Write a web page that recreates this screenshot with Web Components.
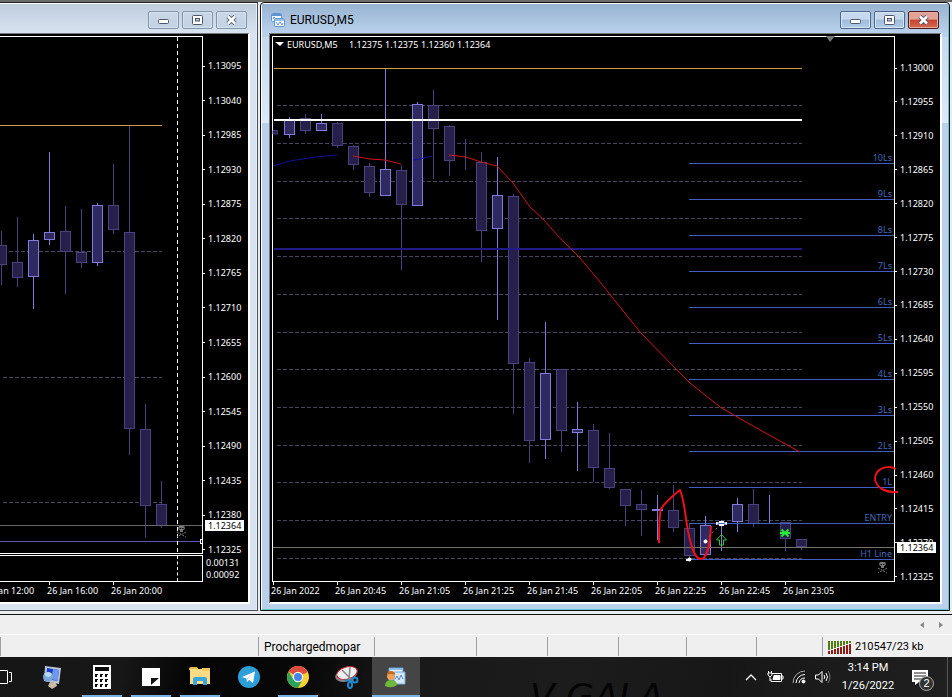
<!DOCTYPE html>
<html lang="en">
<head>
<meta charset="utf-8">
<title>EURUSD,M5</title>
<style>
html,body{margin:0;height:100%;background:#f0f0f0}
body{font-family:Roboto,"Noto Sans",sans-serif;font-size:12px;color:#000}
</style>
</head>
<body>
<trade-desk></trade-desk>
<script>
const define = (name, html, setup) => customElements.define(name, class extends HTMLElement {
  connectedCallback() {
    if (this.shadowRoot) return;
    const t = document.createElement('template');
    t.innerHTML = typeof html === 'function' ? html(this) : html;
    this.attachShadow({mode: 'open'}).append(t.content.cloneNode(true));
    if (setup) setup(this);
  }
});

/* ---------- window chrome ---------- */
define('window-controls', `
<style>
:host{display:flex;gap:3px}
button{box-sizing:border-box;width:31px;height:18px;padding:0;border:1px solid #8295ad;border-radius:2px;background:linear-gradient(#c9d7e7,#c3d2e3);display:grid;place-items:center;box-shadow:inset 0 0 0 1px #d5e1ee}
:host([active]) button{border-color:#50678a;background:linear-gradient(#c5d8ee 45%,#9fbcdc 50%,#b4cee9);box-shadow:inset 0 0 0 1px #d3e4f6}
:host([active]) button.close{border-color:#4a1a20;background:linear-gradient(#e2a395 45%,#c44330 50%,#d56b52);box-shadow:inset 0 0 0 1px #e4ab9f}
svg{display:block}
</style>
<button aria-label="Minimize"><svg width="13" height="10"><rect x="1.5" y="4.500" width="10" height="4" rx="1" fill="#fff" stroke="#4e5668"/></svg></button>
<button aria-label="Maximize"><svg width="13" height="10"><rect x="1.500" y=".5" width="10" height="9" rx="1" fill="#fff" stroke="#4e5668"/><rect x="4.500" y="3.500" width="4" height="2.500" fill="#b9cbe0" stroke="#4e5668"/></svg></button>
<button class="close" aria-label="Close"><svg width="13" height="10"><path d="M3 1.500L10 8.500M10 1.500L3 8.500" stroke="#4e5668" stroke-width="4.400"/><path d="M3 1.500L10 8.500M10 1.500L3 8.500" stroke="#fff" stroke-width="2.500"/></svg></button>`);

define('chart-window', el => `
<style>
:host{display:flex;flex-direction:column;box-sizing:border-box;min-width:0;border:1px solid #4b5058;border-top-color:#20242a;box-shadow:inset 0 1px #fff,inset -1px 0 #e8eff6;background:#d7e3f0;padding:0 7px 6px 0;border-left:0}
:host([active]){background:linear-gradient(#c4daf1,#dceafa 85px) 0 34px/100% 86px no-repeat,#b9d1ec;border:1px solid #111;box-shadow:inset 0 1px #fff,inset 1px 0 #fff,inset -1px 0 #5cc6cd,inset 0 -1px #5cc6cd;padding:0 7px 6px 8px;border-radius:4px 4px 0 0}
header{display:flex;align-items:center;height:29px;box-sizing:border-box;padding-top:2px;background:linear-gradient(#c0cddd,#d7e3f0);margin:1px -6px 0 0;padding-right:9px;font-size:12px}
:host([active]) header{background:linear-gradient(#98b4d1,#b9d1ec);margin:1px -6px 0 -7px;padding-left:9px;padding-right:9px}
h1{font:inherit;margin:0;flex:1;padding-left:5px}
.client{flex:1;min-height:0;display:flex;flex-direction:column;background:#000;border:solid #fff;border-width:1px 2px 2px 0;border-top-color:#777}
:host([active]) .client{border-left:1px solid #777}
::slotted(*){flex:1;min-height:0}
</style>
<header>${el.title ? `<svg width="14" height="14" aria-hidden="true"><rect x=".5" y=".5" width="10" height="8" rx="1" fill="#eef6ff" stroke="#5e94d0"/><path d="M1 2h9" stroke="#5e94d0" stroke-width="2"/><path d="M2 6l1-2 2 2 1-1" fill="none" stroke="#5e94d0"/><rect x="3.500" y="5.500" width="10" height="8" rx="1" fill="#fff" stroke="#5e94d0"/><path d="M4 7h9" stroke="#77a9de" stroke-width="1.500"/><path d="M5 9l2 3 2-3 2 3 1-2" fill="none" stroke="#5e94d0"/></svg>` : ''}
<h1>${el.title || ''}</h1><window-controls ${el.hasAttribute('active') ? 'active' : ''}></window-controls></header>
<div class="client"><slot></slot></div>`);

/* ---------- scales ---------- */
define('price-scale', el => `
<style>
:host{display:block;position:relative;color:#fff;font-family:"Noto Sans",sans-serif;font-size:9px;line-height:10px}
ul{list-style:none;margin:0;padding:var(--top) 0 0;box-sizing:border-box;height:100%;display:flex;flex-direction:column;justify-content:space-between}
li{display:flex;align-items:center;gap:3px;height:10px}
li::before{content:"";width:2px;height:1px;background:#fff}
b{position:absolute;left:2px;top:var(--now);background:#fff;color:#000;font-weight:400;line-height:11px;padding:0 3px}
</style>
<ul>${el.getAttribute('values').split(' ').map(v => `<li>${v}</li>`).join('')}</ul><b>${el.getAttribute('now')}</b>`);

define('time-scale', el => `
<style>
:host{display:flex;overflow:hidden;color:#fff;font-family:"Noto Sans",sans-serif;font-size:9px;line-height:18px;white-space:nowrap}
span{flex:0 0 64px;position:relative}
span::before{content:"";position:absolute;left:2px;top:0;width:1px;height:3px;background:#fff}
</style>${el.getAttribute('values').split('|').map(v => `<span>${v}</span>`).join('')}`);

/* ---------- plots ---------- */
const candles = list => list.map(([x, hi, top, bot, lo, up]) => {
  const s = up ? '#817cdc' : '#48427f', f = up ? '#2f2960' : '#251f49';
  return `<path d="M${x + .5} ${hi}V${lo}" stroke="${s}"/><rect x="${x - 4.5}" y="${top + .5}" width="10" height="${Math.max(bot - top - 1, 0)}" fill="${f}" stroke="${s}"/>`;
}).join('');
const dashes = (ys, x1, x2) => ys.map(y => `<path d="M${x1} ${y + .5}H${x2}" stroke="#48465f" stroke-dasharray="4 2"/>`).join('');
const skull = (x, y) => `<g transform="translate(${x} ${y})" fill="#777"><path d="M2 0h5l1 2-1 2H6v2H3V4H2L1 2z"/><path d="M2.500 2h1.500v1H2.500zM5 2h1.500v1H5z" fill="#000"/><path d="M0 6l9 5M9 6L0 11" stroke="#777" fill="none" stroke-dasharray="2 1"/></g>`;

const plotStyle = `<style>
:host{display:block;position:relative;overflow:hidden;min-width:0}
svg{display:block;position:absolute;width:100%;height:100%;overflow:visible}
text{font-family:"Noto Sans",sans-serif;font-size:9px}
</style>`;

define('hourly-plot', `${plotStyle}<svg role="img" aria-label="Hourly candles"><g transform="translate(0 -37)">
${dashes([251, 377, 502], 3, 162)}
${candles([[1,231,245,265,285],[17,217,262,278,287],[33,234,240,277,309,1],[49,152,232,240,245,1],[65,206,231,252,294],[81,209,252,263,268],[97,203,205,263,266,1],[113,164,205,230,234],[129,125,232,429,455],[145,404,429,506,538],[161,481,504,526,528]])}
<path d="M0 125.500H162" stroke="#d39a55"/><path d="M0 525.500H202" stroke="#686868"/><path d="M0 541.500H202" stroke="#5b55ad"/>
<path d="M177.500 37V553" stroke="#fff" stroke-dasharray="4 3"/>
<rect x="200.500" y="539.500" width="3" height="4" stroke="#fff"/>${skull(177, 526)}
</g></svg>`);

const levels = ['10Ls','9Ls','8Ls','7Ls','6Ls','5Ls','4Ls','3Ls','2Ls','1L','ENTRY','H1 Line'];
const quotes = ['1.12375','1.12375','1.12360','1.12364'];
define('five-minute-plot', `${plotStyle}<style>:host{overflow:visible}</style><svg role="img" aria-label="EURUSD five minute candles"><g transform="translate(-273 -37)">
<path d="M826 36h9l-5 6z" fill="#777"/>
${dashes([105,143,181,218,256,294,332,369,407,445,482,520,558], 277, 802)}
<path d="M273 134V130.500H277.500V134H273" fill="#251f49" stroke="#433d78"/>
${candles([[289,117,120,135,138,1],[305,114,118,131,134],[321,114,123,131,131,1],[337,122,123,146,148],[353,145,146,165,170],[369,163,166,193,197],[385,68,169,196,196,1],[401,165,170,205,270],[417,102,104,206,206,1],[433,90,105,129,179],[449,125,126,161,176],[465,139,160,161,170],[481,152,162,231,262],[497,157,195,229,320,1],[513,194,196,364,414],[529,358,362,441,463],[545,322,373,440,459,1],[561,369,369,431,452],[577,402,429,433,471,1],[593,424,430,468,482],[609,433,468,488,489],[625,489,489,506,526],[641,490,504,510,536],[657,495,509,511,540,1],[673,485,510,528,532],[689,523,528,556,558],[705,516,525,555,557,1],[721,520,522,525,551,1],[737,498,504,522,532,1],[753,489,504,524,527],[769,495,522,523,523,1],[785,522,522,539,551],[801,539,539,547,550]])}
<path d="M274 68.500H802" stroke="#c9a43c"/><path d="M274 120H802" stroke="#fff" stroke-width="2"/><path d="M274 249H802" stroke="#1f1a85" stroke-width="2"/><path d="M273 547.500H894" stroke="#74746a"/>
<g fill="#4a68bd" stroke="none" text-anchor="end">${levels.map((l, i) => `<path d="M689 ${163.5 + i * 36}H894" stroke="#445cc4"/><text x="892" y="${161 + i * 36}">${l}</text>`).join('')}</g>
<g fill="none"><path d="M273 166L290 161 315 157 337 155M413 160L420 159 432 156" stroke="#10109c"/>
<path d="M353 156L370 159 385 160 401 164M449 155L466 157 481 162 497 166 513 183 530 207 543 219 560 238 580 258 600 282 640 332 675 368 690 383 720 407 760 430 800 452" stroke="#d0141c"/></g>
<path d="M705 540L724 521" stroke="#6b6898" stroke-dasharray="2 3"/>
<g fill="#fff"><circle cx="705.500" cy="541.500" r="2"/><circle cx="689.500" cy="559.500" r="2"/><path d="M686 559h2v2h-2zM716 522l3 1-3 2zM727 522l-3 1 3 2z"/><path d="M719 521h5v2h-5zM719 524h5v2h-5z"/></g>
<path d="M721.500 534.500L726.500 540H723.500V545H719.500V540H716.500Z" fill="none" stroke="#2fc83c"/>
<path d="M781.500 529.500l7 7M788.500 529.500l-7 7M780 533h10" stroke="#27ed35" stroke-width="2"/>
<g fill="none" stroke="#ee1018" stroke-width="2" stroke-linejoin="round"><path d="M659 543Q659 515 661 509 665 502 680 490C686 505 685 522 690 540 693 552 696 559 701 559S710 547 711 526"/><path d="M896 469C887 464 875 469 875 479 876 488 886 493 898 492"/></g>
${skull(878, 562)}
<g fill="#fff"><path d="M275 42h9l-4 4z"/><text x="287" y="48">EURUSD,M5</text>${quotes.map((q, i) => `<text x="${349 + i * 36}" y="48">${q}</text>`).join('')}</g>
</g></svg>`);

define('hourly-chart', `
<style>
:host{display:grid;box-sizing:border-box;padding-top:2px;grid-template:minmax(0,1fr) 27px 20px/minmax(0,1fr) 45px}
hourly-plot{border:solid #fff;border-width:1px 1px 1px 0;margin-bottom:1px}
price-scale{--top:25px;--now:484px}
.sub{border:solid #fff;border-width:1px 1px 1px 0;position:relative}
.sub::after{content:"";position:absolute;left:177px;top:0;bottom:0;border-left:1px dashed #fff}
.range{color:#fff;font-family:"Noto Sans",sans-serif;font-size:9px;line-height:12px;padding:2px 0 0 3px}
time-scale{grid-column:1/-1;margin-left:-17px}
</style>
<hourly-plot></hourly-plot>
<price-scale now="1.12364" values="1.13095 1.13040 1.12985 1.12930 1.12875 1.12820 1.12765 1.12710 1.12655 1.12600 1.12545 1.12490 1.12435 1.12380 1.12325"></price-scale>
<div class="sub"></div><div class="range">0.00131<br>0.00092</div>
<time-scale values="26 Jan 12:00|26 Jan 16:00|26 Jan 20:00"></time-scale>`);

define('five-minute-chart', `
<style>
:host{display:grid;box-sizing:border-box;padding:2px 0 0 2px;grid-template:minmax(0,1fr) 20px/minmax(0,1fr) 45px}
five-minute-plot{border:1px solid #fff;z-index:1}
price-scale{--top:27px;--now:506px}
time-scale{grid-column:1/-1;margin-left:-1px}
</style>
<five-minute-plot></five-minute-plot>
<price-scale now="1.12364" values="1.13000 1.12955 1.12910 1.12865 1.12820 1.12775 1.12730 1.12685 1.12640 1.12595 1.12550 1.12505 1.12460 1.12415 1.12370 1.12325"></price-scale>
<time-scale values="26 Jan 2022|26 Jan 20:45|26 Jan 21:05|26 Jan 21:25|26 Jan 21:45|26 Jan 22:05|26 Jan 22:25|26 Jan 22:45|26 Jan 23:05"></time-scale>`);

/* ---------- bottom bars ---------- */
define('tab-strip', `
<style>
:host{display:flex;justify-content:flex-end;align-items:center;gap:11px;padding-right:7px;border-top:1px solid #111;border-bottom:1px solid #fff;background:#efefef;box-sizing:border-box;height:21px}
button{border:0;background:none;padding:0;width:8px;height:10px;display:grid;place-items:center}
</style>
<button aria-label="Scroll left"><svg width="4" height="6"><path d="M4 0v6L0 3z" fill="#888"/></svg></button>
<button aria-label="Scroll right"><svg width="4" height="6"><path d="M0 0v6l4-3z" fill="#888"/></svg></button>`);

define('status-bar', `
<style>
:host{display:grid;grid-template-columns:258fr 116fr 102fr 71fr 71fr 68fr 70fr 66fr 130fr;height:22px;background:#efefef;padding:2px 0 1px;box-sizing:border-box}
div{border-left:1px solid #a0a0a0;padding-left:5px;display:flex;align-items:center;gap:4px;min-width:0;white-space:nowrap}
div:first-child{border:0}
.net{font-size:11px}
</style>
<div></div><div>Prochargedmopar</div><div></div><div></div><div></div><div></div><div></div><div></div>
<div class="net"><svg width="23" height="14" aria-hidden="true">${[0,1,2,3,4,5,6,7].map(i => `<rect x="${i * 3}" y="1" width="2" height="${9 - i}" fill="#4f7d16"/><rect x="${i * 3}" y="${11 - i}" width="2" height="${3 + i}" fill="#8d1c16"/>`).join('')}</svg>210547/23 kb</div>`);

define('task-button', el => `
<style>
:host{display:block;flex:0 0 48px}
button{width:100%;height:100%;border:0;padding:0;background:none;display:grid;place-items:center;position:relative}
:host([running]) button::after{content:"";position:absolute;left:4px;right:4px;bottom:0;height:2px;background:#78b3e4}
:host([active]) button{background:#454545}
:host([active]) button::after{left:0;right:0}
</style><button aria-label="${el.getAttribute('label')}"><slot></slot></button>`);

define('task-bar', `
<style>
:host{display:flex;height:40px;position:relative;overflow:hidden;background:linear-gradient(100deg,#161616,#171717 13%,#050505 20%,#080808 32%,#191919 43%,#1c1c1c 60%,#171717 76%,#202020);color:#fff}
svg{display:block}
.art{position:absolute;left:530px;top:24px;font:italic 36px/32px "DejaVu Sans",sans-serif;color:#040404;white-space:pre}
nav{display:flex;gap:1px;flex:1;position:relative}
.view{flex:0 0 28px;border:0;padding:0;background:none;display:flex;align-items:center}
.tray{display:flex;align-items:center;position:relative}
.tray button{border:0;padding:0;background:none;display:grid;place-items:center;height:40px;width:24px}
time{font-size:11px;line-height:18px;text-align:center;width:66px}
.tray .note{width:47px;box-sizing:border-box;position:relative;border-right:1px solid #555;margin-right:4px;padding-right:9px}
.note span{position:absolute;left:18px;top:19px;width:13px;height:13px;border:1px solid #aaa;border-radius:50%;background:#333;color:#fff;font-size:11px;line-height:13px;text-align:center}
</style>
<div class="art" aria-hidden="true">V GALA</div>
<nav>
<button class="view" aria-label="Task view"><svg width="13" height="14" fill="none" stroke="#fff"><path d="M0 .5H7.500V13.500H0M9 2.500H11.500V11.500H9"/></svg></button>
<task-button label="Computer"><svg width="24" height="26"><path d="M4 2L20 4 18 20 3 17z" fill="#b9c5d5"/><path d="M6 4L18 6 16.500 17 5 15z" fill="#173dc9"/><path d="M12 5l6 1-1.500 11-6-2z" fill="#6e98eb"/><circle cx="7" cy="13" r="5" fill="#7aa6dc"/><path d="M3 10q4-4 8 0-2 5-6 2z" fill="#b8d9f5"/><path d="M9 18l6 1 1 3-5 3-4-3z" fill="#c9b9a5"/></svg></task-button>
<task-button running label="Calculator"><svg width="18" height="24"><path d="M0 0h18v24H0z" fill="#fff"/><path d="M2 2h14v4H2z" fill="#0a0a0a"/><g fill="#0a0a0a">${[9,14,19].map(y => [2,7,12].map(x => `<path d="M${x} ${y}h3v1h-1v2h-2z"/>`).join('')).join('')}</g></svg></task-button>
<task-button running label="Sticky Notes"><svg width="18" height="18"><path d="M0 0h18v18H0z" fill="#fff"/><path d="M9 10h8l-8 7z" fill="#111"/></svg></task-button>
<task-button running label="File Explorer"><svg width="22" height="20"><path d="M0 2q0-2 2-2h6l2 3H0z" fill="#e9b94c"/><path d="M1 2h20v15H1z" fill="#fbdc82"/><path d="M13 1h8v3h-8z" fill="#f2c75d"/><path d="M4 18v-6q0-2 2-2h10q2 0 2 2v6h-4v-4H8v4z" fill="#38a6dc"/></svg></task-button>
<task-button label="Telegram"><svg width="22" height="22"><circle cx="11" cy="11" r="11" fill="#2c9fd9"/><path d="M4 11L17 5.500 15 17 11 14 9 16 8.500 12.500z" fill="#fff"/><path d="M8.500 12.500L15 7.500 10 13 9 16z" fill="#b9dff2"/></svg></task-button>
<task-button running label="Chrome"><svg width="22" height="22"><circle cx="11" cy="11" r="11" fill="#f9cf35"/><path d="M11 11L1.500 5.500A11 11 0 0 1 20.500 5.500z" fill="#dd4b3e"/><path d="M1.500 5.500A11 11 0 0 0 11 22L15.500 13.500 6.500 13.500z" fill="#2ca159"/><path d="M11 5.500h9.500l-2 2H11z" fill="#dd4b3e"/><circle cx="11" cy="11" r="5.200" fill="#fff"/><circle cx="11" cy="11" r="4" fill="#4384ed"/></svg></task-button>
<task-button label="Snipping Tool"><svg width="24" height="24"><ellipse cx="11" cy="10" rx="11" ry="6.500" transform="rotate(-16 11 10)" fill="#8c8587"/><ellipse cx="12" cy="8" rx="10.500" ry="6" transform="rotate(-16 12 8)" fill="#eee" stroke="#c72d35"/><path d="M7 5l9 9M15 2l-1 13" stroke="#888" stroke-width="1.500"/><g fill="none" stroke="#2189ca" stroke-width="2"><circle cx="20" cy="15" r="2.500"/><ellipse cx="15" cy="20" rx="2" ry="3"/><path d="M10 15l7 1"/></g></svg></task-button>
<task-button running active label="MetaTrader"><svg width="22" height="22"><path d="M4 2h14v12H4z" fill="#eaf4fd" stroke="#5b9bd5"/><path d="M4 3h14" stroke="#8abbea" stroke-width="2"/><path d="M9 6h11v12H9z" fill="#d4e7f8" stroke="#73a8da"/><path d="M10 13l2-3 2 4 2-5 2 4" fill="none" stroke="#5a8ec4"/><circle cx="6" cy="10" r="4" fill="#eea15c"/><path d="M2 9q0-4 4-4t4 4q-4-2-8 0z" fill="#c56b21"/><path d="M0 20q0-6 6-6t6 5q-5 4-12 1z" fill="#70b83a"/></svg></task-button>
</nav>
<div class="tray">
<button aria-label="Show hidden icons"><svg width="12" height="8"><path d="M1 7l5-5 5 5" fill="none" stroke="#fff" stroke-width="1.300"/></svg></button>
<button aria-label="Battery"><svg width="17" height="14" fill="none" stroke="#fff"><path d="M5 3.500H14.500V11.500H4V9M14.500 6h1.500v3h-1.500"/><path d="M7 5.500h6v4H6z" fill="#fff"/><path d="M1 3h4v2L3 7 1 5zM1.500 3V1M4.500 3V1M3 7v4"/></svg></button>
<button aria-label="Network"><svg width="14" height="14" fill="none" stroke="#fff"><path d="M1 13A12 12 0 0 1 13 1" stroke="#aaa"/><path d="M4 13A9 9 0 0 1 13 4.500M7 13A6 6 0 0 1 13 8"/><circle cx="11.500" cy="11.500" r="1.500" fill="#fff"/></svg></button>
<button aria-label="Volume"><svg width="16" height="14" fill="none" stroke="#fff"><path d="M.5 5h3L7 1.500v11L3.500 9h-3z"/><path d="M9 5q1.500 2 0 4M11 3q3 4 0 8"/><path d="M13 1q4 6 0 12" stroke="#777"/></svg></button>
<time datetime="2022-01-26T15:14">3:14 PM<br>1/26/2022</time>
<button class="note" aria-label="Notifications"><svg width="18" height="18"><path d="M1 2h16v12H8l-4 3v-3H1z" fill="#fff"/><path d="M3 5h12M3 8h12M3 11h8" stroke="#222"/></svg><span>2</span></button>
</div>`);

define('trade-desk', `
<style>
:host{display:flex;flex-direction:column;min-height:100vh}
main{flex:1;display:grid;grid-template-columns:258fr 690fr;column-gap:2px;padding:2px 2px 3px 0;box-sizing:border-box;background:linear-gradient(#6c6c68 2px,#e9edf0 2px)}
</style>
<main>
<chart-window><hourly-chart></hourly-chart></chart-window>
<chart-window active title="EURUSD,M5"><five-minute-chart></five-minute-chart></chart-window>
</main>
<tab-strip></tab-strip><status-bar></status-bar><task-bar></task-bar>`);
</script>
</body>
</html>
